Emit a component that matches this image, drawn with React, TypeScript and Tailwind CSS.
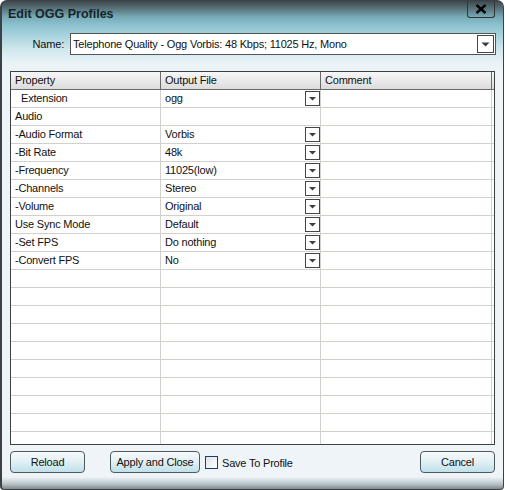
import React from "react";

const rows: { p: string; v: string; dd: boolean; ind?: boolean }[] = [
  { p: "Extension", v: "ogg", dd: true, ind: true },
  { p: "Audio", v: "", dd: false },
  { p: "-Audio Format", v: "Vorbis", dd: true },
  { p: "-Bit Rate", v: "48k", dd: true },
  { p: "-Frequency", v: "11025(low)", dd: true },
  { p: "-Channels", v: "Stereo", dd: true },
  { p: "-Volume", v: "Original", dd: true },
  { p: "Use Sync Mode", v: "Default", dd: true },
  { p: "-Set FPS", v: "Do nothing", dd: true },
  { p: "-Convert FPS", v: "No", dd: true },
];

const empties = Array.from({ length: 11 }, (_, i) => i);

function Arrow({ size = 15 }: { size?: number }) {
  return (
    <svg width={size} height={size} viewBox="0 0 15 15" className="block">
      <polygon points="3.5,5.5 11.5,5.5 7.5,9.5" fill="#3d3d3d" />
    </svg>
  );
}

function DropBtn() {
  return (
    <div className="w-[15px] h-[15px] border border-[#454545] bg-white flex items-center justify-center">
      <svg width="13" height="13" viewBox="0 0 13 13" className="block">
        <polygon points="3,5 10,5 6.5,8.5" fill="#3d3d3d" />
      </svg>
    </div>
  );
}

function Btn({ label, w }: { label: string; w: string }) {
  return (
    <div
      className={`${w} h-[22px] rounded-[4px] border border-[#4d5a5e] bg-[linear-gradient(to_bottom,#f6fafc_0%,#e4f1f5_45%,#bfe0ea_100%)] flex items-center justify-center text-[11px] tracking-[-0.2px] text-[#111]`}
    >
      {label}
    </div>
  );
}

export default function App() {
  return (
    <div className="w-[505px] h-[490px] bg-white font-['Liberation_Sans',Arial,sans-serif]">
      <div className="w-[504px] h-[490px] rounded-t-[7px] rounded-b-[4px] border border-l-2 border-[#3b4144] overflow-hidden flex flex-col bg-[linear-gradient(to_bottom,#3d474b_0px,#566f76_7px,#77aab6_16px,#8cc2ce_24px,#a6d2dc_34px,#cfe7ed_48px,#e9f3f6_62px,#eef4f8_70px,#eef4f8_476px,#b9c4c8_483px,#7f898d_488px)]">
        {/* Title bar */}
        <div className="h-[26px] flex justify-between items-start shrink-0">
          <div className="pl-[6px] h-[26px] flex items-center text-[12.5px] font-bold text-[#17252a]">
            Edit OGG Profiles
          </div>
          <div className="mr-[8px] w-[28px] h-[17px] border border-t-0 border-[#2f3537] rounded-b-[3px] flex items-center justify-center">
            <svg width="12" height="10" viewBox="0 0 12 10" className="block">
              <path d="M1.5 1 L10.5 9 M10.5 1 L1.5 9" stroke="#000" strokeWidth="2.4" />
            </svg>
          </div>
        </div>

        {/* Name row */}
        <div className="mt-[6px] flex items-center shrink-0">
          <div className="w-[62px] text-right text-[11px] tracking-[-0.2px] text-[#111]">Name:</div>
          <div className="ml-[6px] w-[426px] h-[22px] border border-[#555] bg-white flex items-center justify-between">
            <span className="pl-[2px] text-[11px] tracking-[-0.2px] text-[#111]">
              Telephone Quality - Ogg Vorbis: 48 Kbps; 11025 Hz, Mono
            </span>
            <div className="mr-[1px] w-[17px] h-[18px] border border-[#454545] bg-white flex items-center justify-center">
              <Arrow size={15} />
            </div>
          </div>
        </div>

        {/* Table */}
        <div className="mt-[16px] ml-[8px] w-[485px] h-[374px] border border-[#3a4244] bg-white overflow-hidden shrink-0 text-[11px] tracking-[-0.2px] text-[#111]">
          <div className="grid grid-cols-[150px_160px_171px] h-[18px] bg-[linear-gradient(to_bottom,#f7f7f7,#dcdcdc)] border-b border-[#6a6a6a]">
            <div className="border-r border-[#6a6a6a] pl-[4px] flex items-center">Property</div>
            <div className="border-r border-[#6a6a6a] pl-[4px] flex items-center">Output File</div>
            <div className="border-r border-[#6a6a6a] pl-[4px] flex items-center">Comment</div>
          </div>
          {rows.map((r) => (
            <div key={r.p} className="grid grid-cols-[150px_160px_171px] h-[18px] border-b border-[#d2d0ca]">
              <div className={`border-r border-[#d2d0ca] flex items-center ${r.ind ? "pl-[10px]" : "pl-[4px]"}`}>
                {r.p}
              </div>
              <div className="border-r border-[#d2d0ca] pl-[4px] flex items-center justify-between">
                <span>{r.v}</span>
                {r.dd && <DropBtn />}
              </div>
              <div className="border-r border-[#d2d0ca]" />
            </div>
          ))}
          {empties.map((i) => (
            <div key={i} className="grid grid-cols-[150px_160px_171px] h-[18px] border-b border-[#d2d0ca]">
              <div className="border-r border-[#d2d0ca]" />
              <div className="border-r border-[#d2d0ca]" />
              <div className="border-r border-[#d2d0ca]" />
            </div>
          ))}
        </div>

        {/* Buttons */}
        <div className="mt-[6px] ml-[8px] w-[485px] flex items-center shrink-0">
          <Btn label="Reload" w="w-[75px]" />
          <div className="ml-[25px]">
            <Btn label="Apply and Close" w="w-[90px]" />
          </div>
          <div className="ml-[5px] w-[13px] h-[13px] border border-[#1d3e6b] bg-[linear-gradient(to_bottom_right,#dfe3e6,#ffffff)]" />
          <span className="ml-[4px] mt-[2px] text-[11px] tracking-[-0.2px] text-[#111]">Save To Profile</span>
          <div className="ml-auto">
            <Btn label="Cancel" w="w-[75px]" />
          </div>
        </div>
      </div>
    </div>
  );
}
